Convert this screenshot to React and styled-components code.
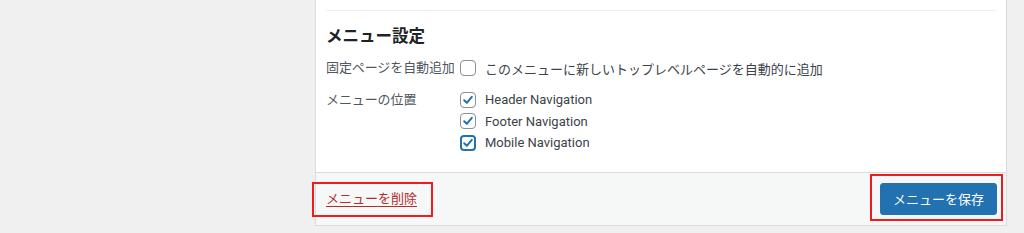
import React from "react";
import styled, { createGlobalStyle } from "styled-components";

const Global = createGlobalStyle`
  html, body { margin: 0; padding: 0; }
  body {
    background: #f0f0f1;
    font-family: Roboto, "Noto Sans CJK JP", sans-serif;
    color: #3c434a;
    font-size: 13px;
  }
`;

const Page = styled.div`
  padding-left: 315px;
  width: 692px;
`;

const Panel = styled.div`
  background: #fff;
  border: 1px solid #dcdcde;
  border-top: none;
  box-shadow: 0 1px 1px rgba(0, 0, 0, 0.04);
`;

const Body = styled.div`
  padding: 10px 10px 18px;
`;

const Section = styled.div`
  border-top: 1px solid #f0f0f1;
`;

const Heading = styled.h3`
  margin: 14px 0 0;
  font-size: 16.5px;
  line-height: 24px;
  font-weight: 700;
  color: #1d2327;
`;

const Row = styled.div`
  display: grid;
  grid-template-columns: 134px 1fr;
  align-items: ${(p) => (p.$top ? "start" : "center")};
  margin-top: ${(p) => p.$mt}px;
`;

const RowLabel = styled.div`
  color: #50575e;
  line-height: ${(p) => p.$lh || 24}px;
  letter-spacing: -0.1px;
`;

const Options = styled.div`
  display: flex;
  flex-direction: column;
`;

const Option = styled.label`
  display: flex;
  align-items: center;
  gap: 9px;
  height: ${(p) => p.$h || 24}px;
  color: #3c434a;
  white-space: nowrap;
`;

const Box = styled.span`
  box-sizing: border-box;
  width: 16px;
  height: 16px;
  border: ${(p) => (p.$focus ? "2px solid #2271b1" : "1px solid #8c8f94")};
  border-radius: 4px;
  background: #fff;
  display: inline-flex;
  align-items: center;
  justify-content: center;
  flex: none;
`;

const Footer = styled.div`
  display: flex;
  justify-content: space-between;
  align-items: center;
  background: #f6f7f7;
  border-top: 1px solid #dcdcde;
  padding: 10px 9px 10px 10px;
`;

const Annotated = styled.span`
  position: relative;
  display: inline-block;
  &::after {
    content: "";
    position: absolute;
    top: ${(p) => p.$t}px;
    bottom: ${(p) => p.$b}px;
    left: ${(p) => p.$l}px;
    right: ${(p) => p.$r}px;
    border: 2px solid #ee1c1c;
    pointer-events: none;
  }
`;

const DeleteLink = styled.a`
  color: #b32d2e;
  text-decoration: underline;
  text-underline-offset: 3px;
  line-height: 20px;
  cursor: pointer;
`;

const SaveButton = styled.button`
  height: 32px;
  padding: 0 12px;
  background: #2271b1;
  border: 1px solid #2271b1;
  border-radius: 3px;
  color: #fff;
  font-family: inherit;
  font-size: 13px;
  cursor: pointer;
`;

function Check({ checked, focus }) {
  return (
    <Box $focus={focus}>
      {checked && (
        <svg width="12" height="12" viewBox="0 0 12 12">
          <path
            d="M2.2 6.2 L4.8 8.8 L9.8 2.8"
            fill="none"
            stroke="#2271b1"
            strokeWidth="2"
            strokeLinecap="round"
            strokeLinejoin="round"
          />
        </svg>
      )}
    </Box>
  );
}

export default function App() {
  return (
    <>
      <Global />
      <Page>
        <Panel>
          <Body>
            <Section>
              <Heading>メニュー設定</Heading>
              <Row $mt={7}>
                <RowLabel>固定ページを自動追加</RowLabel>
                <Option>
                  <Check />
                  このメニューに新しいトップレベルページを自動的に追加
                </Option>
              </Row>
              <Row $mt={9} $top>
                <RowLabel $lh={21.5}>メニューの位置</RowLabel>
                <Options>
                  <Option $h={21.5}>
                    <Check checked />
                    Header Navigation
                  </Option>
                  <Option $h={21.5}>
                    <Check checked />
                    Footer Navigation
                  </Option>
                  <Option $h={21.5}>
                    <Check checked focus />
                    Mobile Navigation
                  </Option>
                </Options>
              </Row>
            </Section>
          </Body>
          <Footer>
            <Annotated $t={-7} $b={-8} $l={-14} $r={-16}>
              <DeleteLink>メニューを削除</DeleteLink>
            </Annotated>
            <Annotated $t={-9} $b={-6} $l={-10} $r={-6}>
              <SaveButton>メニューを保存</SaveButton>
            </Annotated>
          </Footer>
        </Panel>
      </Page>
    </>
  );
}
